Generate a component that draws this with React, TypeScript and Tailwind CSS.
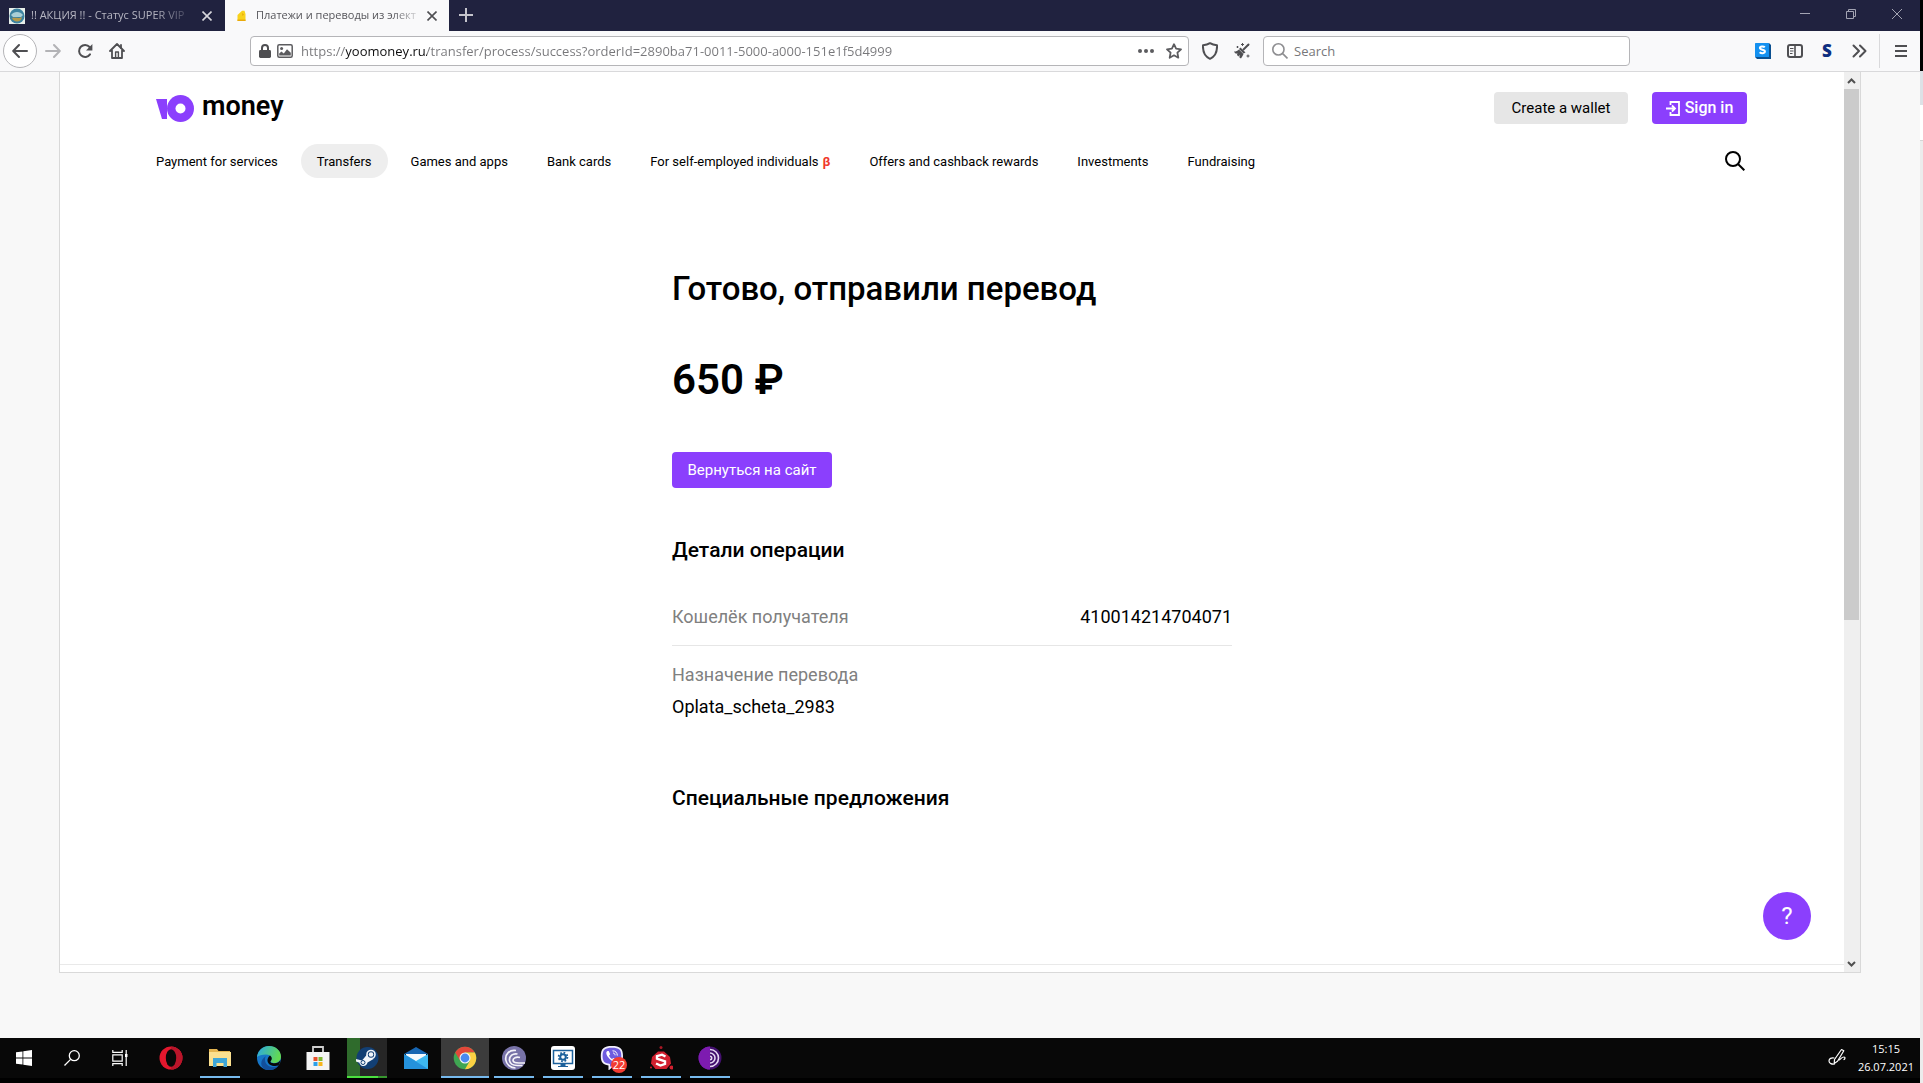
import type { ReactNode } from 'react';
import clsx from 'clsx';

type IconProps = { className?: string };

const navItems = [
  'Payment for services',
  'Transfers',
  'Games and apps',
  'Bank cards',
  'For self-employed individuals',
  'Offers and cashback rewards',
  'Investments',
  'Fundraising',
];

const IconTabClose = ({ className }: IconProps) => (
  <svg viewBox="0 0 10 10" className={clsx('h-[10px] w-[10px]', className)} fill="none" stroke="currentColor" strokeWidth="1.6" aria-hidden>
    <path d="M.5.5l9 9M9.5.5l-9 9" />
  </svg>
);

const IconBack = ({ className }: IconProps) => (
  <svg viewBox="0 0 16 16" className={clsx('h-4 w-4', className)} fill="none" stroke="currentColor" strokeWidth="2" strokeLinecap="round" strokeLinejoin="round" aria-hidden>
    <path d="M15 8H1.5M7 2L1.2 8 7 14" />
  </svg>
);

const IconForward = ({ className }: IconProps) => (
  <svg viewBox="0 0 16 16" className={clsx('h-4 w-4', className)} fill="none" stroke="currentColor" strokeWidth="2" strokeLinecap="round" strokeLinejoin="round" aria-hidden>
    <path d="M1 8h13.5M9 2l5.8 6L9 14" />
  </svg>
);

const IconReload = () => (
  <svg viewBox="0 0 16 16" className="h-4 w-4" fill="none" stroke="currentColor" strokeWidth="2" strokeLinecap="round" aria-hidden>
    <path d="M13 11.4A6 6 0 1 1 12.6 4" />
    <path d="M15.4 1v6.4H9z" fill="currentColor" stroke="none" />
  </svg>
);

const IconHome = () => (
  <svg viewBox="0 0 16 16" className="h-4 w-4" fill="none" stroke="currentColor" strokeWidth="1.8" strokeLinejoin="round" strokeLinecap="round" aria-hidden>
    <path d="M1 8l7-7 7 7M3 7.5V15h10V7.5" />
    <path d="M6.6 14.5V9h2.8v5.5" strokeWidth="1.4" />
    <path d="M12 2v3" />
  </svg>
);

const IconLock = () => (
  <svg viewBox="0 0 12 14" className="h-[14px] w-3" aria-hidden>
    <path d="M3 7V4a3 3 0 0 1 6 0v3" fill="none" stroke="#4f4f52" strokeWidth="2" />
    <rect y="6" width="12" height="8" rx="1.4" fill="#4f4f52" />
  </svg>
);

const IconPicture = () => (
  <svg viewBox="0 0 16 14" className="h-[14px] w-4" aria-hidden>
    <rect x=".8" y=".8" width="14.4" height="12.4" rx="1.5" fill="none" stroke="#5c5c5f" strokeWidth="1.5" />
    <circle cx="4.6" cy="4.4" r="1.5" fill="#5c5c5f" />
    <path d="M2.2 11.6V9.4l2.2-2 2.4 2L10 5.2l3.8 3.6v2.8z" fill="#5c5c5f" />
  </svg>
);

const IconStar = () => (
  <svg viewBox="0 0 16 16" className="h-4 w-4" fill="none" stroke="#5c5c5f" strokeWidth="1.8" strokeLinejoin="round" aria-hidden>
    <path d="M8 1.2l2.1 4.5 4.9.6-3.6 3.4.9 5L8 12.3l-4.3 2.4.9-5L1 6.3l4.9-.6z" />
  </svg>
);

const IconShield = () => (
  <svg viewBox="0 0 16 18" className="h-[18px] w-4" fill="none" stroke="#4f4f52" strokeWidth="2" strokeLinejoin="round" aria-hidden>
    <path d="M8 1.2c2 1.2 4.4 1.8 7 2 .3 6-.8 11-7 13.6C1.8 14.2.7 9.2 1 3.2c2.6-.2 5-.8 7-2z" />
  </svg>
);

const IconBroom = () => (
  <svg viewBox="0 0 16 16" className="h-4 w-4" aria-hidden>
    <path d="M14.5 1.5l-5 5" stroke="#4f4f52" strokeWidth="2" strokeLinecap="round" />
    <path d="M6.5 4.5l5 5-2 1L5 6z" fill="#4f4f52" />
    <path d="M5 6.5C3.8 7.8 2.2 8.6 0 8.6c.4 1 1.2 1.8 2 2.2l1.4-.6-.4 1.8 1.4 1.4 1.2-1.6-.2 2.6 1.6 1.2c.8-1.6 1.800-2.600 2.500-4.600z" fill="#4f4f52" />
    <path d="M8.5 0v3M7 1.5h3M3.5 3v2M2.5 4h2M14 11.5v3M12.5 13h3" stroke="#4f4f52" strokeWidth="1" />
  </svg>
);

const IconMagnifier = ({ className }: IconProps) => (
  <svg viewBox="0 0 20 20" className={className} fill="none" stroke="currentColor" strokeWidth="2" aria-hidden>
    <circle cx="8" cy="8" r="7" />
    <path d="M13 13l6.3 6.3" />
  </svg>
);

const IconSavefrom = () => (
  <svg viewBox="0 0 16 16" className="h-4 w-4" aria-hidden>
    <path d="M14 0l2 2v14H2l-2-2z" fill="#0a4f8f" />
    <rect width="14" height="14" rx=".6" fill="#1491f0" />
    <path d="M9.8 4.2C8.6 3 4.9 3 4.9 5.100c0 2.200 5 1.200 5 3.500 0 2-3.600 2.100-5.300.7" fill="none" stroke="#fff" strokeWidth="2" />
  </svg>
);

const IconSidebar = () => (
  <svg viewBox="0 0 16 14" className="h-[14px] w-4" fill="none" stroke="#4f4f52" aria-hidden>
    <rect x="1" y="1" width="14" height="12" rx="2" strokeWidth="2" />
    <path d="M8 1v12" strokeWidth="1.6" />
    <path d="M3 4.500h3.500M3 7h3.500M3 9.500h2.500" strokeWidth="1.2" />
  </svg>
);

const IconChevrons = () => (
  <svg viewBox="-1 -1 16 16" className="h-4 w-4" fill="none" stroke="#4f4f52" strokeWidth="2" strokeLinecap="round" strokeLinejoin="round" aria-hidden>
    <path d="M1.500 1.500L7 7l-5.500 5.500M8 1.500L13.500 7 8 12.500" />
  </svg>
);

const IconMenu = () => (
  <svg viewBox="0 0 12 12" className="h-3 w-3" stroke="#4f4f52" strokeWidth="2" aria-hidden>
    <path d="M0 1h12M0 6h12M0 11h12" />
  </svg>
);

const IconSignIn = () => (
  <svg viewBox="0 0 14 15" className="h-[15px] w-[14px]" fill="none" stroke="currentColor" strokeWidth="1.8" aria-hidden>
    <path d="M4.500 4V1H13v13H4.500v-3M0 7.500h9M6 4.500l3 3-3 3" />
  </svg>
);

const Logo = () => (
  <a href="#home" className="flex items-center gap-2 text-black">
    <svg viewBox="0 0 38 27" className="h-[27px] w-[38px]" aria-hidden>
      <path d="M0 4h11v20H6z" fill="#8b3ffd" />
      <circle cx="24.5" cy="13.5" r="13.5" fill="#8b3ffd" />
      <circle cx="24.5" cy="13.5" r="5" fill="#fff" />
    </svg>
    <span className="pb-1 text-[27px] leading-7 font-semibold">money</span>
  </a>
);

const TabStrip = () => (
  <div className="flex h-[31px] bg-[#20223f]">
    <div className="flex w-[225px] items-center pl-[9px] pr-[13px] text-[#b6b6c2]">
      <svg viewBox="0 0 16 16" className="h-4 w-4 shrink-0" aria-hidden>
        <rect width="16" height="16" fill="#e8efe9" />
        <circle cx="8" cy="8" r="7.5" fill="#3c82a0" />
        <path d="M2 7c3-4 9-4 12 0l-2 2H4z" fill="#a9cfd6" />
        <path d="M3 10c3-1 7 1 10-1-.5 3-2.500 4.500-5 4.500S4 12 3 10z" fill="#b49a4c" />
      </svg>
      <span className="ml-[6px] text-[11px] whitespace-nowrap [mask-image:linear-gradient(to_right,#000_80%,rgba(0,0,0,0.3))]">
        !! АКЦИЯ !! - Статус SUPER VIP
      </span>
      <button type="button" aria-label="Close tab" className="ml-auto">
        <IconTabClose className="text-[#d6d6dc]" />
      </button>
    </div>
    <div className="flex w-[224px] items-center bg-[#f9f9fa] px-3 text-[#55555a]">
      <svg viewBox="0 0 10 12" className="h-3 w-[10px] shrink-0" aria-hidden>
        <path d="M.5 5L5 .8h2.500L8.500 4v7h-8z" fill="#f8d21c" />
        <path d="M.5 9.500h8V11h-8zM5 3l2 1.500L5.500 6z" fill="#e9a90b" />
      </svg>
      <span className="ml-[9px] text-[11px] whitespace-nowrap [mask-image:linear-gradient(to_right,#000_85%,rgba(0,0,0,0.25))]">
        Платежи и переводы из элект
      </span>
      <button type="button" aria-label="Close tab" className="ml-auto">
        <IconTabClose className="text-[#4f4f52]" />
      </button>
    </div>
    <button type="button" aria-label="New tab" className="mb-[2px] ml-[10px] text-[#c4c4cc]">
      <svg viewBox="0 0 14 14" className="h-[14px] w-[14px]" stroke="currentColor" strokeWidth="2" aria-hidden>
        <path d="M7 0v14M0 7h14" />
      </svg>
    </button>
    <div className="ml-auto flex items-center gap-9 pr-[18px] pb-1 text-[#a3a4b3]">
      <button type="button" aria-label="Minimize">
        <svg viewBox="0 0 10 10" className="h-[10px] w-[10px]" stroke="currentColor" aria-hidden>
          <path d="M0 4.500h10" />
        </svg>
      </button>
      <button type="button" aria-label="Restore">
        <svg viewBox="0 0 10 10" className="h-[10px] w-[10px]" fill="none" stroke="currentColor" aria-hidden>
          <path d="M.5 2.500h7v7h-7zM2.500 2.500v-2h7v7h-2" />
        </svg>
      </button>
      <button type="button" aria-label="Close window">
        <svg viewBox="0 0 10 10" className="h-[10px] w-[10px]" stroke="currentColor" aria-hidden>
          <path d="M0 0l10 10M10 0L0 10" />
        </svg>
      </button>
    </div>
  </div>
);

const Toolbar = () => (
  <div className="flex h-[41px] items-center border-b border-[#d9d9db] bg-[#f9f9fa] text-[#4f4f52]">
    <button type="button" aria-label="Back" className="ml-[3px] flex h-[34px] w-[34px] items-center justify-center rounded-full border border-[#b5b5b8] bg-white">
      <IconBack />
    </button>
    <button type="button" aria-label="Forward" className="ml-2 text-[#b3b3b6]">
      <IconForward />
    </button>
    <button type="button" aria-label="Reload" className="ml-4">
      <IconReload />
    </button>
    <button type="button" aria-label="Home" className="ml-4">
      <IconHome />
    </button>
    <div className="ml-[125px] flex h-[30px] min-w-0 flex-1 items-center rounded-sm border border-[#b5b5b8] bg-white pl-2 pr-[6px]">
      <IconLock />
      <span className="ml-[6px]">
        <IconPicture />
      </span>
      <input
        type="text"
        aria-label="Address"
        defaultValue="https://yoomoney.ru/transfer/process/success?orderId=2890ba71-0011-5000-a000-151e1f5d4999"
        className="ml-2 min-w-0 flex-1 bg-[linear-gradient(to_right,#77777a_0_45px,#0c0c0d_45px_126px,#77777a_126px)] bg-clip-text pt-[2px] text-[13px] text-transparent outline-none"
      />
      <button type="button" aria-label="Page actions">
        <svg viewBox="0 0 16 4" className="h-1 w-4" fill="#5c5c5f" aria-hidden>
          <circle cx="2" cy="2" r="2" />
          <circle cx="8" cy="2" r="2" />
          <circle cx="14" cy="2" r="2" />
        </svg>
      </button>
      <button type="button" aria-label="Bookmark this page" className="ml-3">
        <IconStar />
      </button>
    </div>
    <button type="button" aria-label="Tracking protection" className="ml-[13px]">
      <IconShield />
    </button>
    <button type="button" aria-label="Clean data" className="ml-4">
      <IconBroom />
    </button>
    <label className="ml-[13px] flex h-[30px] w-[367px] items-center rounded-sm border border-[#b5b5b8] bg-white pl-2">
      <IconMagnifier className="h-4 w-4 text-[#8e8e91]" />
      <input type="text" aria-label="Search" placeholder="Search" className="ml-[6px] flex-1 pt-[2px] text-[13px] outline-none placeholder:text-[#77777a]" />
    </label>
    <div className="ml-[125px] flex items-center gap-4">
      <button type="button" aria-label="Download helper">
        <IconSavefrom />
      </button>
      <button type="button" aria-label="Sidebars">
        <IconSidebar />
      </button>
      <button type="button" className="w-4 text-center text-[17px] leading-4 font-extrabold text-[#0f2f80]">
        S
      </button>
      <button type="button" aria-label="More tools">
        <IconChevrons />
      </button>
    </div>
    <div className="ml-3 h-[34px] w-px bg-[#d9d9db]" />
    <button type="button" aria-label="Open menu" className="ml-[15px] mr-[13px]">
      <IconMenu />
    </button>
  </div>
);

const SiteHeader = () => (
  <header className="pt-5 pr-[97px] pl-24">
    <div className="flex h-8 items-center">
      <Logo />
      <a href="#wallet" className="ml-auto flex h-8 w-[134px] items-center justify-center rounded bg-[#e6e6e6] text-[15px]">
        Create a wallet
      </a>
      <a href="#signin" className="ml-6 flex h-8 w-[95px] items-center justify-center gap-[5px] rounded bg-[#8b3ffd] text-base font-medium text-white">
        <IconSignIn />
        Sign in
      </a>
    </div>
    <div className="mt-5 flex h-[34px] items-center justify-between">
      <nav className="-ml-4 flex gap-[7px] text-[13px]">
        {navItems.map((item) => (
          <a
            key={item}
            href="#nav"
            className={clsx('flex h-[34px] items-center rounded-full px-4 pt-[2px]', item === 'Transfers' && 'bg-[#eeeeee]')}
          >
            {item}
            {item.startsWith('For self') ? <span className="ml-1 font-bold text-[#f0382b]">β</span> : null}
          </a>
        ))}
      </nav>
      <button type="button" aria-label="Search the site" className="mr-[2px]">
        <IconMagnifier className="h-5 w-5" />
      </button>
    </div>
  </header>
);

const Receipt = () => (
  <section className="mx-auto mt-[91px] w-[560px]">
    <h1 className="text-[33px] leading-10 font-medium">Готово, отправили перевод</h1>
    <p className="mt-[47px] text-[42px] leading-[48px] font-semibold">650 ₽</p>
    <button type="button" className="mt-12 flex h-9 w-[160px] items-center justify-center rounded bg-[#8b3ffd] text-[15px] text-white">
      Вернуться на сайт
    </button>

    <h2 className="mt-12 text-[21px] leading-7 font-medium">Детали операции</h2>
    <dl className="mt-[37px] text-[18px] leading-8">
      <div className="flex justify-between border-b border-[#e6e6e6] pb-3">
        <dt className="text-[#808080]">Кошелёк получателя</dt>
        <dd>410014214704071</dd>
      </div>
      <div className="pt-[13px]">
        <dt className="text-[#808080]">Назначение перевода</dt>
        <dd>Oplata_scheta_2983</dd>
      </div>
    </dl>

    <h2 className="mt-[61px] text-[21px] leading-7 font-medium">Специальные предложения</h2>
  </section>
);

const Scrollbar = () => (
  <div className="flex w-4 shrink-0 flex-col bg-[#efefef] pr-px" aria-hidden>
    <svg viewBox="0 0 15 17" className="h-[17px] w-[15px]" fill="none" stroke="#505050" strokeWidth="2">
      <path d="M4 11l3.500-3.500L11 11" />
    </svg>
    <div className="h-[531px] bg-[#cbcbcb]" />
    <svg viewBox="0 0 15 17" className="mt-auto h-[17px] w-[15px]" fill="none" stroke="#505050" strokeWidth="2">
      <path d="M4 7l3.500 3.500L11 7" />
    </svg>
  </div>
);

type TaskProps = { label: string; state?: 'idle' | 'running' | 'active'; children: ReactNode };

const TaskButton = ({ label, state = 'idle', children }: TaskProps) => (
  <button
    type="button"
    aria-label={label}
    className={clsx('flex h-10 w-12 flex-col items-center', state === 'active' && 'bg-[#3c3c3c]')}
  >
    <span className="flex h-[38px] items-center pt-[2px]">{children}</span>
    {state !== 'idle' ? (
      <span className={clsx('h-[2px] bg-[#76b9ed]', state === 'active' ? 'w-12' : 'w-10')} />
    ) : null}
  </button>
);

const Taskbar = () => (
  <footer className="flex h-[45px] items-start border-b-[5px] border-black bg-[#080808] text-white">
    <TaskButton label="Start">
      <svg viewBox="0 0 16 16" className="h-4 w-4" fill="#fff" aria-hidden>
        <path d="M0 2.300l6.500-.9v6.200H0zM7.300 1.300L16 0v7.600H7.300zM0 8.400h6.500v6.200L0 13.700zM7.300 8.400H16V16l-8.700-1.300z" />
      </svg>
    </TaskButton>
    <TaskButton label="Search">
      <svg viewBox="0 0 16 16" className="h-4 w-4" fill="none" stroke="#fff" strokeWidth="1.3" aria-hidden>
        <circle cx="10.3" cy="5.7" r="5" />
        <path d="M6.600 9.400L.5 15.500" />
      </svg>
    </TaskButton>
    <TaskButton label="Task view">
      <svg viewBox="0 0 16 16" className="h-4 w-4" fill="none" stroke="#fff" strokeWidth="1.2" aria-hidden>
        <path d="M.8 0v2.400h9.400V0M.8 4.800h9.400v6.400H.8zM.8 16v-2.400h9.400V16M14.200 0v16" />
        <path d="M13 4h2.500v3H13z" fill="#fff" stroke="none" />
      </svg>
    </TaskButton>
    <div className="ml-[3px] flex gap-px">
      <TaskButton label="Opera">
        <svg viewBox="0 0 24 24" className="h-6 w-6" aria-hidden>
          <circle cx="12" cy="12" r="11.5" fill="#e3172d" />
          <path d="M12 .5a11.500 11.500 0 0 1 0 23z" fill="#b9152a" />
          <ellipse cx="12" cy="12" rx="5.2" ry="8.8" fill="#080808" />
        </svg>
      </TaskButton>
      <TaskButton label="File Explorer" state="running">
        <svg viewBox="0 0 24 24" className="h-6 w-6" aria-hidden>
          <path d="M1 3h8l1.500 2H22v4H1z" fill="#e5b550" />
          <path d="M1 6h22v14H1z" fill="#fbe08f" />
          <path d="M5 12h14v9h-3.500v-4h-7v4H5z" fill="#3ea6d8" />
        </svg>
      </TaskButton>
      <TaskButton label="Microsoft Edge">
        <svg viewBox="0 0 24 24" className="h-6 w-6" aria-hidden>
          <defs>
            <linearGradient id="edge-top" x1="0" x2="1" y1="0" y2=".3">
              <stop offset="0" stopColor="#2aa7e8" />
              <stop offset="1" stopColor="#62d952" />
            </linearGradient>
          </defs>
          <circle cx="12" cy="12" r="12" fill="#1676c8" />
          <path d="M0 11C.8 4.500 6 0 12 0c7 0 12 5 12 10.500 0 4-3 6.500-6.500 6.500-3 0-4.500-1.200-3.500-2.500 1-1.500 1-6-5-6-4 0-7.500 1-9 2.500z" fill="url(#edge-top)" />
          <path d="M8 13.500c0 5 4.500 8 9 7.500 2 0 3.500-.8 4.500-1.500C18.500 24 13 25 8.500 23.500 3 21.500 2.500 14 9 10c-.6 1-1 2-1 3.500z" fill="#124f9c" />
          <path d="M13 9.500c2.500 2 2 4 .7 5.500-.9 1.300.8 2.300 3.800 2.300 2.500 0 5-1.300 6-3.300-.3 2-1 4-2 5.500-5 1.500-10.500-.5-11-4.500-.2-2.500 1-4.500 2.500-5.500z" fill="#080808" />
        </svg>
      </TaskButton>
      <TaskButton label="Microsoft Store">
        <svg viewBox="0 0 24 24" className="h-6 w-6" aria-hidden>
          <path d="M7 7V1h10v6" fill="none" stroke="#cfcfcf" strokeWidth="1.8" />
          <path d="M.5 6h23v18H.5z" fill="#f4f4f4" />
          <path d="M7.500 11h4v4h-4z" fill="#e8502b" />
          <path d="M12.500 11h4v4h-4z" fill="#7fb832" />
          <path d="M7.500 16h4v4h-4z" fill="#2b9fe8" />
          <path d="M12.500 16h4v4h-4z" fill="#f7b51c" />
        </svg>
      </TaskButton>
      <div className="flex w-12 justify-center">
        <button type="button" aria-label="Steam" className="flex h-10 w-10 flex-col items-center bg-[linear-gradient(to_right,#2f6b2c_0_13px,#262626_13px)]">
          <span className="flex h-[38px] items-center pt-[2px]">
            <svg viewBox="0 0 24 24" className="h-6 w-6" aria-hidden>
              <circle cx="12.5" cy="12" r="11" fill="#123f74" />
              <path d="M1 13l6 1.500L12.500 8l6 5-6 3.500C12 19 10 20.500 7.500 20 5.500 19.500 4.500 18 4.500 16.800L1 15.500z" fill="#f2f6fa" />
              <circle cx="16" cy="8.5" r="4" fill="#123f74" stroke="#f2f6fa" strokeWidth="1.6" />
              <circle cx="16" cy="8.5" r="2.3" fill="#f2f6fa" />
              <circle cx="8" cy="16.5" r="2" fill="none" stroke="#123f74" strokeWidth="1" />
            </svg>
          </span>
          <span className="h-[2px] w-10 bg-[linear-gradient(to_right,#4be03f_0_31px,#37962f_31px)]" />
        </button>
      </div>
      <TaskButton label="Mail">
        <svg viewBox="0 0 24 24" className="h-6 w-6" aria-hidden>
          <path d="M0 8L12 1l12 7z" fill="#1766b3" />
          <path d="M2 8h20v8H2z" fill="#f4f9fd" />
          <path d="M0 8l12 7 12-7v15H0z" fill="#3db8f0" />
          <path d="M0 8l24 15H0z" fill="#2592dc" />
        </svg>
      </TaskButton>
      <TaskButton label="Google Chrome" state="active">
        <svg viewBox="0 0 24 24" className="h-6 w-6" aria-hidden>
          <circle cx="12" cy="12" r="11.3" fill="#3fa652" />
          <path d="M2.200 6.400A11.300 11.300 0 0 1 21.800 6.400H12L7.200 14.800z" fill="#e2483a" />
          <path d="M21.800 6.400A11.300 11.300 0 0 1 12 23.300l4.900-8.500L12 6.400z" fill="#fbd043" />
          <circle cx="12" cy="12" r="5.5" fill="#f5f5f5" />
          <circle cx="12" cy="12" r="4.4" fill="#4a8af0" />
        </svg>
      </TaskButton>
      <TaskButton label="BitTorrent" state="running">
        <svg viewBox="0 0 24 24" className="h-6 w-6" fill="none" stroke="#f4f3f9" strokeWidth="1.7" aria-hidden>
          <circle cx="12" cy="12" r="12" fill="#7873a8" stroke="none" />
          <path d="M14 4.500C7.500 3.500 3 8 3.800 14c.7 4.500 4.700 8 9.700 8M15.500 8C11 7 7 10 7.500 14.500c.5 3.500 4 5 8 5h5M18 11.500c-4-1-7 .5-7 2.800 0 2.200 3 2.700 6 2.700h6" />
        </svg>
      </TaskButton>
      <TaskButton label="Display settings" state="running">
        <svg viewBox="0 0 24 24" className="h-6 w-6" aria-hidden>
          <rect width="24" height="24" rx="3" fill="#fff" />
          <path d="M2.500 4.500h19v13h-19z" fill="none" stroke="#1b609b" strokeWidth="1.5" />
          <path d="M9.500 18h5v2h2.500v1H7v-1h2.500z" fill="#1b609b" />
          <circle cx="12" cy="11" r="2.8" fill="none" stroke="#1b609b" strokeWidth="2" />
          <circle cx="12" cy="11" r="4.4" fill="none" stroke="#1b609b" strokeWidth="1.8" strokeDasharray="1.7 1.756" />
        </svg>
      </TaskButton>
      <TaskButton label="Viber" state="running">
        <span className="relative">
          <svg viewBox="0 0 24 24" className="h-6 w-6" aria-hidden>
            <path d="M12 0c8 0 11 2.500 11 10s-3 9.500-9 9.800L8.500 24.500v-5C3 18.500.8 16.500.8 10 .8 2.500 4 0 12 0z" fill="#f2effd" />
            <path d="M12 1.800c7 0 9.300 1.900 9.300 8.200s-2.600 8.100-8.300 8.100l-3 3v-3.200c-5-.6-7.400-2.100-7.400-7.900 0-6.300 2.400-8.200 9.400-8.200z" fill="#6e5ce0" />
            <path d="M7.500 5c-2 1-1.200 3.500.3 5.800 1.700 2.500 4.200 4.700 6.200 4.700 1 0 2-1.300 1.700-2l-2.200-1.600-1.600 1c-1.400-.6-2.400-1.900-2.800-3.300l1.100-1.300L8.700 5z" fill="#fff" />
            <path d="M12.500 4.800c3 0 4.800 1.900 4.800 4.800M13 7c1.300.1 2 .9 2.100 2.300" fill="none" stroke="#fff" strokeWidth="1" />
          </svg>
          <span className="absolute -right-[3px] -bottom-[3px] flex h-4 w-4 items-center justify-center rounded-full bg-[#f23b32] text-[11px] leading-4">
            22
          </span>
        </span>
      </TaskButton>
      <TaskButton label="S player" state="running">
        <svg viewBox="0 0 24 24" className="h-6 w-6" aria-hidden>
          <path d="M9 5.500h6l6 5.500 1 6.500-4.500 5.500h-11L2 17.500 3 11z" fill="#d2202f" />
          <circle cx="12" cy="1.5" r="1.5" fill="#a81824" />
          <circle cx="22.500" cy="21.500" r="2" fill="#d2202f" />
          <circle cx="2" cy="21.500" r="1" fill="#d2202f" />
          <path d="M16.500 10.500L13 8.700 8 10.200v2.400l8 2.800v2.400l-4.500 1.700L7 17.500" fill="none" stroke="#fff" strokeWidth="2.4" />
        </svg>
      </TaskButton>
      <TaskButton label="Tor Browser" state="running">
        <svg viewBox="0 0 24 24" className="h-6 w-6" fill="none" aria-hidden>
          <circle cx="12" cy="12" r="11.5" fill="#43106e" />
          <path d="M12 .5a11.500 11.500 0 0 0 0 23z" fill="#7d1bb0" />
          <path d="M12 3.500a8.500 8.500 0 0 1 0 17M12 7a5 5 0 0 1 0 10M12 10.300a1.700 1.700 0 0 1 0 3.400" stroke="#e6d8f2" strokeWidth="1.6" />
        </svg>
      </TaskButton>
    </div>
    <div className="ml-auto flex items-center pr-[6px]">
      <button type="button" aria-label="Windows Ink" className="mr-3">
        <svg viewBox="0 0 18 18" className="h-[18px] w-[18px]" fill="none" stroke="#fff" strokeWidth="1.2" strokeLinecap="round" strokeLinejoin="round" aria-hidden>
          <path d="M6.500 11.500l7-10 2.300 1.300-6.300 10.500-3.300 2.200z" />
          <path d="M6 10c-2.500-.5-5 .5-5 3s3 3.500 5.500 3M11 12c2-1 2.500-3 5-3 1.500 0 1 2 0 2.500" />
        </svg>
      </button>
      <time className="pt-[2px] text-center text-[11px] leading-[18px]">
        15:15
        <br />
        26.07.2021
      </time>
    </div>
  </footer>
);

export default function App() {
  return (
    <div className="flex min-h-screen font-['Open_Sans','Noto_Sans',sans-serif]">
      <div className="flex min-w-0 flex-1 flex-col bg-[#f8f8f8]">
        <TabStrip />
        <Toolbar />
        <div className="mx-[59px] mb-[65px] flex flex-1 border-x border-b border-[#d9d9d9] bg-white font-['Roboto',sans-serif] text-black">
          <main className="relative flex min-w-0 flex-1 flex-col">
            <SiteHeader />
            <Receipt />
            <div className="mt-auto h-2 border-t border-[#e9e9e9]" />
            <button
              type="button"
              aria-label="Help"
              className="absolute right-[33px] bottom-8 flex h-12 w-12 items-center justify-center rounded-full bg-[#8b3ffd] text-2xl text-white"
            >
              ?
            </button>
          </main>
          <Scrollbar />
        </div>
        <Taskbar />
      </div>

      {/* sliver of the neighbouring window at the screen edge */}
      <div className="flex w-[3px] shrink-0 flex-col bg-[#ececec]">
        <div className="h-[71px] bg-black" />
        <div className="h-[34px] bg-[#dde1e6]" />
        <div className="h-9 border-b border-[#d5d5d5] bg-white" />
      </div>
    </div>
  );
}
